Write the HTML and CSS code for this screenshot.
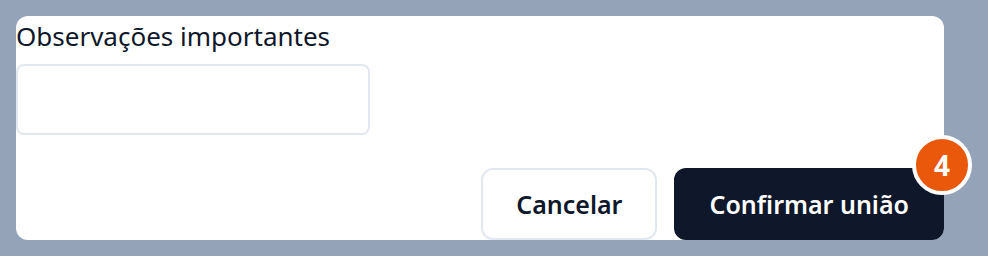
FILE: index.html
```html
<html>
<head>
    <title>Observações</title>
    <link rel="stylesheet" href="styles.css">
</head>
<body>
    <div class="card">
        <label for="obs" class="label">Observações importantes</label>
        <textarea id="obs" class="obs"></textarea>
        <div class="actions">
            <button type="button" class="btn cancel">Cancelar</button>
            <button type="submit" class="btn confirm">
                Confirmar união
                <span class="badge">4</span>
            </button>
        </div>
    </div>
</body>
</html>
```

FILE: styles.css
```css
body {
    margin: 0;
    padding: 16px;
    background: #94a3b8;
    font-family: "Noto Sans", sans-serif;
    color: #0f172a;
}
.card {
    background: white;
    border-radius: 12px;
    width: 928px;
    display: flex;
    flex-direction: column;
    align-items: flex-start;
}
.label {
    font-size: 26px;
    line-height: 40px;
    margin-bottom: 8px;
}
.obs {
    width: 354px;
    height: 71px;
    border: 2px solid #e2e8f0;
    border-radius: 8px;
    resize: none;
    box-sizing: border-box;
}
.actions {
    align-self: stretch;
    display: flex;
    justify-content: flex-end;
    gap: 17px;
    margin-top: 33px;
}
.btn {
    font-family: "Noto Sans", sans-serif;
    font-size: 25px;
    font-weight: 600;
    line-height: 36px;
    padding: 16px 33px;
    border: 2px solid #e2e8f0;
    border-radius: 12px;
    cursor: pointer;
}
.cancel {
    background: white;
    color: #0f172a;
}
.confirm {
    position: relative;
    background: #0f172a;
    border-color: #0f172a;
    color: white;
}
.badge {
    position: absolute;
    top: -35px;
    right: -30px;
    width: 52px;
    height: 52px;
    border: 4px solid white;
    border-radius: 50%;
    background: #ea580c;
    color: white;
    font-size: 28px;
    font-weight: bold;
    line-height: 52px;
    text-align: center;
}
```
